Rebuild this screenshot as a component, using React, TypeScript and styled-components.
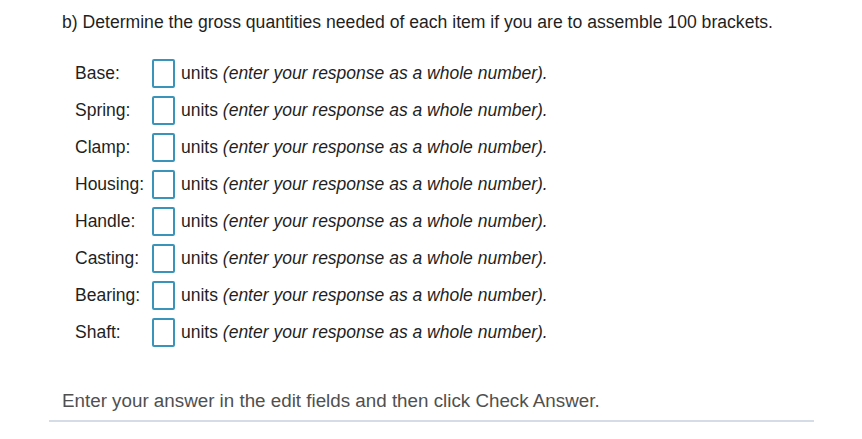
import { createGlobalStyle } from 'styled-components'
import styled from 'styled-components'

const GlobalStyle = createGlobalStyle`
  html, body {
    margin: 0;
    padding: 0;
    background: #ffffff;
  }
  body {
    font-family: 'Liberation Sans', Arial, sans-serif;
  }
`

const Page = styled.div`
  width: 862px;
  height: 439px;
  box-sizing: border-box;
  padding: 10px 0 0 0;
  display: flex;
  flex-direction: column;
`

const Question = styled.div`
  padding-left: 62px;
  font-size: 17.6px;
  line-height: 24px;
  color: #1f1f1f;
`

const Items = styled.div`
  margin-top: 25px;
  padding-left: 75px;
  display: flex;
  flex-direction: column;
  gap: 8px;
`

const Row = styled.div`
  display: grid;
  grid-template-columns: 71px 23px auto;
  column-gap: 6px;
  align-items: center;
  height: 29px;
`

const Label = styled.span`
  font-size: 17.5px;
  color: #1f1f1f;
`

const Box = styled.input`
  box-sizing: border-box;
  width: 23px;
  height: 29px;
  margin: 0;
  padding: 0;
  border: 2px solid #3a94b9;
  border-radius: 2px;
  background: #fff;
  outline: none;
`

const Units = styled.span`
  font-size: 17.5px;
  color: #1f1f1f;
  white-space: nowrap;
`

const Hint = styled.em`
  font-style: italic;
`

const Footer = styled.div`
  margin-top: auto;
  margin-left: 49px;
  width: 765px;
  padding: 0 0 8px 13px;
  box-sizing: border-box;
  border-bottom: 2px solid #d6dce6;
  font-size: 18.8px;
  line-height: 22px;
  color: #505050;
`

const Spacer = styled.div`
  height: 17px;
`

const items = ['Base:', 'Spring:', 'Clamp:', 'Housing:', 'Handle:', 'Casting:', 'Bearing:', 'Shaft:']

export default function App() {
  return (
    <>
      <GlobalStyle />
      <Page>
        <Question>
          b) Determine the gross quantities needed of each item if you are to assemble 100 brackets.
        </Question>
        <Items>
          {items.map((name) => (
            <Row key={name}>
              <Label>{name}</Label>
              <Box type="text" aria-label={name} />
              <Units>
                units <Hint>(enter your response as a whole number).</Hint>
              </Units>
            </Row>
          ))}
        </Items>
        <Footer>Enter your answer in the edit fields and then click Check Answer.</Footer>
        <Spacer />
      </Page>
    </>
  )
}
